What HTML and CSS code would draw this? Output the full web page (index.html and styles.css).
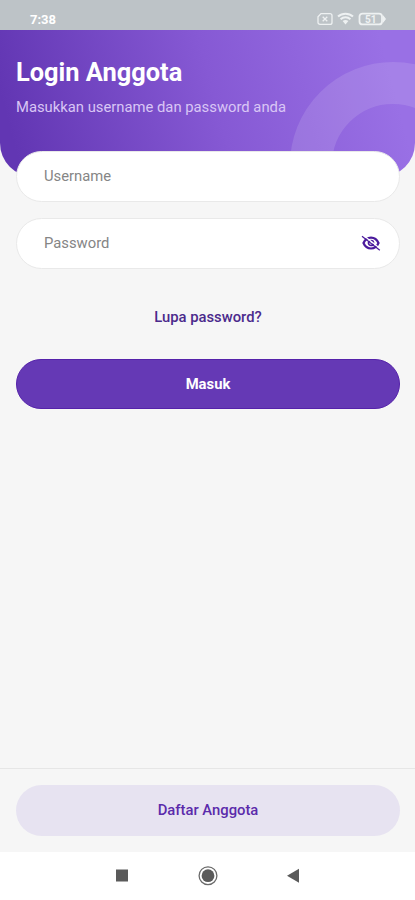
FILE: index.html
```html
<!DOCTYPE html>
<html lang="id">
<head>
  <meta charset="UTF-8" />
  <meta name="viewport" content="width=device-width, initial-scale=1.0"/>
  <title>Login Anggota</title>
  <link rel="stylesheet" href="styles.css">
</head>
<body>
  <div class="status-bar">
    <span class="time">7:38</span>
    <svg class="status-icons" width="70" height="14" viewBox="0 0 70 14" fill="none" stroke="#eef1f2" stroke-width="1.3">
      <path d="M4 1.6h9a2 2 0 0 1 2 2v6.8a2 2 0 0 1-2 2H3a2 2 0 0 1-2-2V4.8z"/>
      <path d="M5.7 4.7l4.6 4.6M10.3 4.7L5.7 9.3"/>
      <path d="M21 4.6a11 11 0 0 1 15 0M23.6 7.2a7.2 7.2 0 0 1 9.8 0" stroke-width="2"/>
      <path d="M25.6 9a4.8 4.8 0 0 1 5.8 0l-2.9 3.6z" fill="#eef1f2" stroke="none"/>
      <rect x="42.5" y="1.6" width="22.5" height="10.8" rx="3" stroke-width="1.8"/>
      <path d="M66.4 4.6l1.8 2.4-1.8 2.4z" fill="#eef1f2"/>
      <text x="53.8" y="10.6" class="battery-level">51</text>
    </svg>
  </div>

  <header>
    <svg class="ring" width="206" height="206" viewBox="0 0 206 206">
      <circle cx="103" cy="103" r="82" fill="none" stroke="#fff" stroke-opacity="0.12" stroke-width="42"/>
    </svg>
    <h1>Login Anggota</h1>
    <p>Masukkan username dan password anda</p>
  </header>

  <main>
    <form id="loginForm">
      <div class="form-group">
        <input type="text" id="username" placeholder="Username" />
      </div>

      <div class="form-group">
        <input type="password" id="password" placeholder="Password" />
        <svg class="toggle" width="20" height="20" viewBox="0 0 20 20" fill="none" stroke="#4b1a9c">
          <path d="M2.5 10c3-7.3 12-7.3 15 0c-3 7.3-12 7.3-15 0z" stroke-width="2.2"/>
          <circle cx="10" cy="10" r="2.5" stroke-width="1.7"/>
          <path d="M2.6 2.4l16.5 13.2" stroke="#fff" stroke-width="1.3"/>
          <path d="M1 3.2l17.8 14" stroke-width="1.2"/>
        </svg>
      </div>

      <a href="#" class="forgot">Lupa password?</a>
      <button type="submit">Masuk</button>
    </form>
  </main>

  <footer>
    <a href="#" class="register">Daftar Anggota</a>
  </footer>

  <div class="nav-bar">
    <svg width="20" height="20" viewBox="0 0 20 20">
      <rect x="4" y="3.5" width="12" height="12" fill="#5a5a5a"/>
    </svg>
    <svg width="20" height="20" viewBox="0 0 20 20">
      <circle cx="10" cy="9.7" r="8.9" fill="none" stroke="#6a6a6a" stroke-width="1.3"/>
      <circle cx="10" cy="9.7" r="6.4" fill="#5a5a5a"/>
    </svg>
    <svg width="20" height="20" viewBox="0 0 20 20">
      <path d="M3 9.7L15 2.7v14z" fill="#5a5a5a"/>
    </svg>
  </div>
</body>
</html>
```
FILE: styles.css
```css
* {
  box-sizing: border-box;
}

body {
  font-family: Roboto, sans-serif;
  margin: 0;
  height: 100vh;
  display: flex;
  flex-direction: column;
  background: #f6f6f6;
}

.status-bar {
  height: 30px;
  flex-shrink: 0;
  display: flex;
  justify-content: space-between;
  padding: 12px 28px 0 30px;
  background: #bdc3c7;
}

.time {
  color: #fff;
  font-size: 13px;
  font-weight: bold;
  line-height: 15px;
}

.battery-level {
  fill: #eef1f2;
  stroke: none;
  font-size: 10px;
  font-weight: bold;
  text-anchor: middle;
}

header {
  position: relative;
  height: 147px;
  flex-shrink: 0;
  padding: 27px 16px 0;
  overflow: hidden;
  border-radius: 0 0 34px 34px;
  background: linear-gradient(75deg, #6236b3 5%, #8659d4 52%, #9970e5 92%);
}

.ring {
  position: absolute;
  top: 32px;
  left: 290px;
}

h1 {
  margin: 0;
  color: #fff;
  font-size: 25.4px;
  line-height: 30px;
}

p {
  margin: 11px 0 0;
  color: #d9c6f5;
  font-size: 14.8px;
  line-height: 18px;
}

main {
  position: relative;
  flex: 1;
  margin-top: -26.5px;
  padding: 0 15px 0 16px;
}

form {
  display: flex;
  flex-direction: column;
}

.form-group {
  position: relative;
  margin-bottom: 16px;
}

input {
  display: block;
  width: 100%;
  height: 51px;
  padding: 0 56px 0 27px;
  border: 1px solid #e9e9e9;
  border-radius: 26px;
  background: #fff;
  font-family: inherit;
  font-size: 14.8px;
}

input::placeholder {
  color: #858585;
}

.toggle {
  position: absolute;
  top: 15px;
  right: 19px;
}

.forgot {
  align-self: center;
  margin-top: 23.5px;
  color: #4b2a8c;
  font-size: 14.8px;
  font-weight: 500;
  line-height: 18px;
  text-decoration: none;
}

button {
  height: 50px;
  margin-top: 33px;
  border: 1px solid #5522aa;
  border-radius: 25px;
  background: #6539b5;
  color: #fff;
  font-family: inherit;
  font-size: 14.8px;
  font-weight: bold;
}

footer {
  padding: 16px 15px 16px 16px;
  border-top: 1px solid #e6e6e6;
}

.register {
  display: block;
  height: 51px;
  border-radius: 26px;
  background: #e7e3f1;
  color: #5b2bab;
  font-size: 14.8px;
  font-weight: 500;
  line-height: 50px;
  text-align: center;
  text-decoration: none;
}

.nav-bar {
  height: 48px;
  flex-shrink: 0;
  display: flex;
  justify-content: center;
  align-items: center;
  gap: 66px;
  background: #fff;
}
```
